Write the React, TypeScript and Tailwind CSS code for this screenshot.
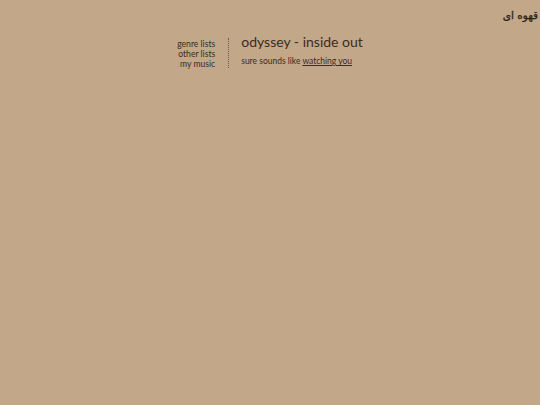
import React from "react";

const links = ["genre lists", "other lists", "my music"];

export default function App() {
  return (
    <div
      className="min-h-[405px] w-full bg-[#c2a789] text-[#3a2c1f]"
      style={{ fontFamily: "Lato, 'Noto Sans', sans-serif" }}
    >
      <div className="flex justify-end px-[2px] pt-[7px]">
        <span
          className="text-[10.5px] leading-[16px] text-[#2e2216]"
          style={{ fontFamily: "'DejaVu Sans', sans-serif", WebkitTextStroke: "0.3px #2e2216" }}
          dir="rtl"
        >
          قهوه ای
        </span>
      </div>
      <div className="flex justify-center pt-[15px]">
        <div className="flex items-start">
          <nav className="flex flex-col items-end pt-[1px] pr-[13px] text-[8.6px] leading-[10px]">
            {links.map((l) => (
              <a key={l} href="#">
                {l}
              </a>
            ))}
          </nav>
          <div className="h-[30px] border-l border-dotted border-[#6e5a45]" />
          <div className="pl-[12px] -mt-[5px]">
            <h1 className="text-[14px] leading-[18px]">odyssey - inside out</h1>
            <p className="mt-[5px] text-[8.5px] leading-[10px]">
              sure sounds like <a href="#" className="underline">watching you</a>
            </p>
          </div>
        </div>
      </div>
    </div>
  );
}
